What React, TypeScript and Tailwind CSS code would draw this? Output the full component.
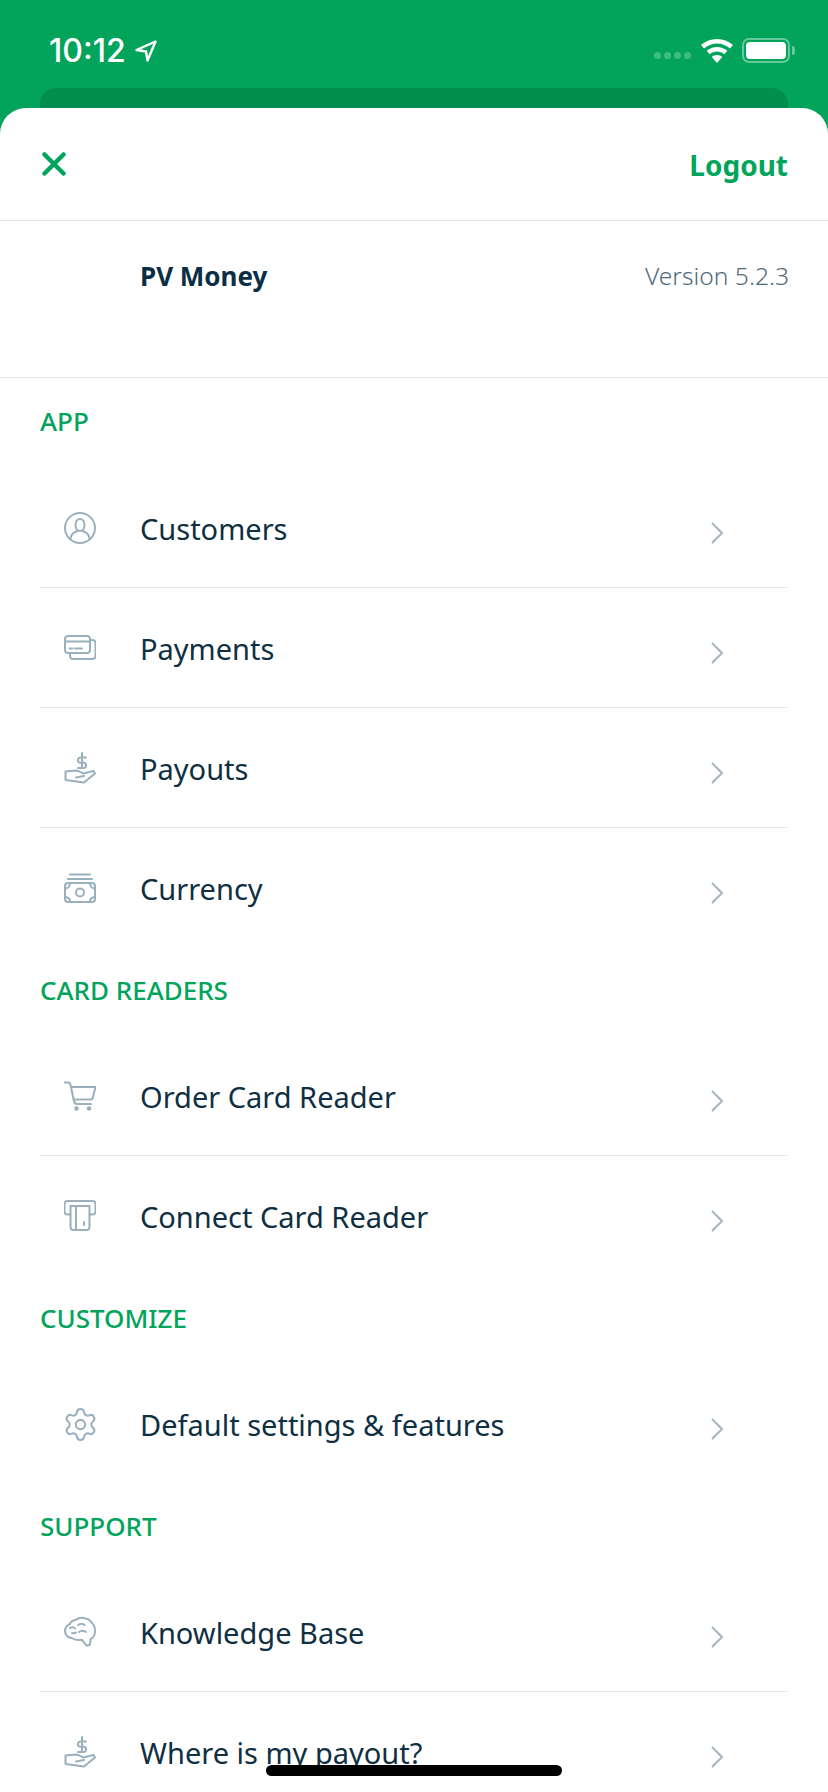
import React from "react";
import { Settings } from "lucide-react";

const font = { fontFamily: '"Noto Sans", sans-serif' };

const iconStroke = {
  fill: "none",
  stroke: "#9ab0bc",
  strokeWidth: 2,
  strokeLinecap: "round" as const,
  strokeLinejoin: "round" as const,
};

const IconBox: React.FC<{ children: React.ReactNode }> = ({ children }) => (
  <svg viewBox="0 0 32 32" className="w-[32px] h-[32px] shrink-0" {...iconStroke}>
    {children}
  </svg>
);

const CustomerIcon = () => (
  <IconBox>
    <circle cx="16" cy="16" r="15" />
    <path d="M11.5 13c0-3.5 2-6 4.500-6s4.500 2.500 4.500 6-2 6-4.500 6-4.500-2.500-4.500-6z" />
    <path d="M6.500 27c0-4 2-6.500 7-8M25.500 27c0-4-2-6.500-7-8" />
  </IconBox>
);

const CardsIcon = () => (
  <IconBox>
    <rect x="1" y="4" width="25" height="17" rx="3" />
    <path d="M1 9.500h25M5.500 16.500h3M11 16.500h7" />
    <path d="M26 8h2.500a3 3 0 0 1 3 3v13a3 3 0 0 1-3 3H9a3 3 0 0 1-3-3v-3" />
  </IconBox>
);

const PayoutIcon = () => (
  <IconBox>
    <path d="M18 1v15M22 5.500h-5.500a2.500 2.500 0 0 0 0 5.200h3a2.500 2.500 0 0 1 0 5.200h-5.500" />
    <path d="M1.500 19.500L12 18.500c3 0 5 2 7 3l10.500-2.500 1.500 2.500-11 9L1.500 28z" />
    <path d="M12 25.500l8-1.500" />
  </IconBox>
);

const CurrencyIcon = () => (
  <IconBox>
    <path d="M6 2.500h20M4 7h24" />
    <rect x="1" y="11" width="30" height="19" rx="3" />
    <circle cx="16" cy="20.500" r="4" />
    <path d="M1 16.500c3 0 5-2.500 5-5.500M31 16.500c-3 0-5-2.500-5-5.500M1 25c3 0 5 2 5 5M31 25c-3 0-5 2-5 5" />
  </IconBox>
);

const CartIcon = () => (
  <IconBox>
    <path d="M0.800 2.500H4a2.500 2.500 0 0 1 2.400 2L10 21a3.500 3.500 0 0 0 3.500 3H27" />
    <path d="M7 7h24.500L29 17a3 3 0 0 1-3 2.500H9.500" />
    <circle cx="12.500" cy="28.500" r="1.300" fill="#9ab0bc" />
    <circle cx="25" cy="28.500" r="1.300" fill="#9ab0bc" />
  </IconBox>
);

const ReaderIcon = () => (
  <IconBox>
    <path d="M6.500 14.500h-3a3 3 0 0 1-3-3V4a3 3 0 0 1 3-3h25a3 3 0 0 1 3 3v7.500a3 3 0 0 1-3 3h-3" />
    <path d="M6.500 6h19M6.500 6v21a3 3 0 0 0 3 3h13a3 3 0 0 0 3-3V6M12 6v24M20 22v3" />
  </IconBox>
);

const BrainIcon = () => (
  <IconBox>
    <path d="M17.700 23.700l5 6 3.300-1 .7-5.700c3-1.500 4.300-4.500 4.300-7.700 0-3.500-1-6.500-3-8.300-1.500-2.500-3.500-4.300-6-4.300-3.500-1.500-7-1-10 1-3 .5-5.500 2-6 4.300C2.500 9.500 1 12.500 1 15.300c0 3.500 3 6.700 6.700 6.700 3 1.800 7 2.500 10 1.700z" />
    <path d="M6 12c2-1 4-1 5 .5M14 9c2-1.500 5-1.500 6.500 0M15 16c2-1.500 5-1.500 7 0M8 17c1.500 .5 3 .5 4-.5" />
  </IconBox>
);

const GearIcon = () => (
  <Settings size={37} strokeWidth={1.3} className="text-[#9ab0bc] shrink-0 -m-[2.5px]" />
);

const Chevron = () => (
  <svg viewBox="0 0 14 22" className="w-[14px] h-[22px] shrink-0 translate-y-[5px]" fill="none" stroke="#a3b5c0" strokeWidth="2">
    <path d="M2 1l10 10L2 21" />
  </svg>
);

const Row: React.FC<{ icon: React.ReactNode; label: string; last?: boolean }> = ({ icon, label, last }) => (
  <div className={`flex items-center h-[120px] pl-[24px] pr-[64px] ${last ? "" : "border-b border-[#e3e8ea]"}`}>
    {icon}
    <span className="ml-[44px] flex-1 text-[29px] text-[#0f2f42] translate-y-[1px]">{label}</span>
    <Chevron />
  </div>
);

const SectionLabel: React.FC<{ title: string; first?: boolean }> = ({ title, first }) => (
  <div className={`flex items-center pb-[3px] text-[26px] font-medium text-[#02a45b] ${first ? "h-[90px]" : "h-[88px]"}`}>
    {title}
  </div>
);

const StatusBar = () => (
  <div className="flex items-center h-[88px] pt-[13px] pl-[49px] pr-[33px] text-white">
    <span className="text-[32px] font-medium leading-none" style={{ fontFamily: "Inter, sans-serif" }}>10:12</span>
    <svg viewBox="0 0 22 22" className="w-[22px] h-[22px] ml-[9px]" fill="none" stroke="#fff" strokeWidth="2.400" strokeLinejoin="round">
      <path d="M20.500 1.500L1.500 10l9.500 1.500L12.500 20.500z" />
    </svg>
    <div className="flex-1" />
    <div className="flex gap-[3px] mt-[10px]">
      <div className="w-[7px] h-[7px] rounded-full bg-white/25" />
      <div className="w-[7px] h-[7px] rounded-full bg-white/25" />
      <div className="w-[7px] h-[7px] rounded-full bg-white/25" />
      <div className="w-[7px] h-[7px] rounded-full bg-white/25" />
    </div>
    <svg viewBox="0 0 32 24" className="w-[32px] h-[24px] ml-[10px]" fill="#fff">
      <path d="M16 0C10 0 4.500 2.200 0 6l3 3.500C6.500 6.500 11 4.500 16 4.500s9.500 2 13 5L32 6C27.500 2.200 22 0 16 0z" />
      <path d="M16 8c-3.900 0-7.500 1.400-10.300 3.800l3 3.400C10.700 13.500 13.200 12.500 16 12.500s5.300 1 7.300 2.700l3-3.400C23.500 9.400 19.900 8 16 8z" />
      <path d="M16 16c-2 0-3.800.700-5.200 1.900L16 24l5.200-6.100C19.800 16.700 18 16 16 16z" />
    </svg>
    <div className="ml-[9px] w-[48px] h-[25px] rounded-[7px] border-[2px] border-white/40 p-[2px] flex">
      <div className="flex-1 rounded-[4px] bg-white" />
    </div>
    <div className="ml-[2px] w-[3px] h-[9px] rounded-r-full bg-white/40" />
  </div>
);

export default function App() {
  return (
    <div className="relative w-[828px] h-[1792px] overflow-hidden bg-[#02a45b]" style={font}>
      <StatusBar />
      <div className="mx-[40px] h-[20px] rounded-t-[16px] bg-[#038e50]" />
      <div className="bg-white rounded-t-[26px] h-[1684px]">
        <div className="flex items-center justify-between h-[113px] pl-[42px] pr-[40px] border-b border-[#e1e7ea]">
          <svg viewBox="0 0 24 24" className="w-[24px] h-[24px]" fill="none" stroke="#02a45b" strokeWidth="4.500" strokeLinecap="round">
            <path d="M2.500 2.500l19 19M21.500 2.500l-19 19" />
          </svg>
          <span className="text-[28px] font-bold text-[#02a45b] translate-y-[1px]">Logout</span>
        </div>
        <div className="flex justify-between h-[157px] pt-[35px] pl-[140px] pr-[39px] border-b border-[#e1e7ea]">
          <span className="text-[26px] leading-[40px] font-bold text-[#0b2e45]">PV Money</span>
          <span className="text-[24.6px] leading-[40px] font-light text-[#4f6a7b]">Version 5.2.3</span>
        </div>
        <div className="mx-[40px]">
          <SectionLabel title="APP" first />
          <Row icon={<CustomerIcon />} label="Customers" />
          <Row icon={<CardsIcon />} label="Payments" />
          <Row icon={<PayoutIcon />} label="Payouts" />
          <Row icon={<CurrencyIcon />} label="Currency" last />
          <SectionLabel title="CARD READERS" />
          <Row icon={<CartIcon />} label="Order Card Reader" />
          <Row icon={<ReaderIcon />} label="Connect Card Reader" last />
          <SectionLabel title="CUSTOMIZE" />
          <Row icon={<GearIcon />} label="Default settings & features" last />
          <SectionLabel title="SUPPORT" />
          <Row icon={<BrainIcon />} label="Knowledge Base" />
          <Row icon={<PayoutIcon />} label="Where is my payout?" last />
        </div>
      </div>
      <div className="absolute left-[266px] top-[1765px] w-[296px] h-[11px] rounded-full bg-black" />
    </div>
  );
}
